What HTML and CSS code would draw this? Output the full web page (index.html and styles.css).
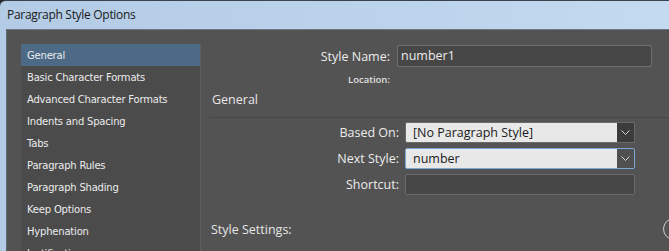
FILE: index.html
```html
<!DOCTYPE html>
<html>
<head>
<meta charset="utf-8">
<link rel="stylesheet" href="styles.css">
</head>
<body>
<div class="window">
  <div class="titlebar">Paragraph Style Options</div>
  <div class="frame">
    <div class="content">
      <ul class="nav">
        <li class="sel">General</li>
        <li>Basic Character Formats</li>
        <li>Advanced Character Formats</li>
        <li>Indents and Spacing</li>
        <li>Tabs</li>
        <li>Paragraph Rules</li>
        <li>Paragraph Shading</li>
        <li>Keep Options</li>
        <li>Hyphenation</li>
        <li>Justification</li>
      </ul>
      <div class="panel">
        <div class="name-row">
          <span class="label">Style Name:</span>
          <div class="input name-input">number1</div>
        </div>
        <div class="loc-row"><span class="label small">Location:</span></div>
        <div class="heading">General</div>
        <div class="section">
          <div class="row">
            <span class="label">Based On:</span>
            <div class="select">
              <span class="val">[No Paragraph Style]</span>
              <span class="arrow"><svg width="9" height="5" viewBox="0 0 9 5"><path d="M0.5 0.5 L4.5 4.5 L8.5 0.5" fill="none" stroke="#d8d8d8" stroke-width="1"/></svg></span>
            </div>
          </div>
          <div class="row">
            <span class="label">Next Style:</span>
            <div class="select focus">
              <span class="val">number</span>
              <span class="arrow"><svg width="9" height="5" viewBox="0 0 9 5"><path d="M0.5 0.5 L4.5 4.5 L8.5 0.5" fill="none" stroke="#d8d8d8" stroke-width="1"/></svg></span>
            </div>
          </div>
          <div class="row">
            <span class="label">Shortcut:</span>
            <div class="input shortcut"></div>
          </div>
          <div class="settings-row">
            <span class="settings">Style Settings:</span>
            <span class="circle"></span>
          </div>
        </div>
      </div>
    </div>
  </div>
</div>
</body>
</html>
```
FILE: styles.css
```css
html, body {
  margin: 0;
  padding: 0;
  width: 669px;
  height: 251px;
  overflow: hidden;
  background: #2a2a2a;
}
.window {
  width: 669px;
  height: 251px;
  display: flex;
  flex-direction: column;
  background: linear-gradient(90deg, #b3cbe5 0%, #bad2ea 50%, #c3daf0 100%);
  border-top: 1px solid #3a4450;
  border-top-left-radius: 6px;
  box-sizing: border-box;
  overflow: hidden;
}
.titlebar {
  height: 28px;
  box-sizing: border-box;
  padding: 5px 0 0 7px;
  font-family: "Open Sans", "Noto Sans", sans-serif;
  font-size: 12px;
  letter-spacing: -0.3px;
  color: #1a1a1a;
  flex: none;
}
.frame {
  flex: 1;
  padding-left: 6px;
  display: flex;
}
.content {
  flex: 1;
  background: #535353;
  border-left: 1px solid #5f6b78;
  border-top: 1px solid #6d7884;
  padding: 14px 0 0 14px;
  display: flex;
  align-items: flex-start;
  font-family: "Open Sans", "Noto Sans", sans-serif;
  color: #e6e6e6;
}
.nav {
  list-style: none;
  margin: 0;
  padding: 0;
  width: 179px;
  flex: none;
  background: #4b4b4b;
  border-right: 1px solid #5e5e5e;
  height: 230px;
  font-family: "DejaVu Sans", sans-serif;
  font-size: 10px;
  letter-spacing: -0.2px;
}
.nav li {
  height: 20px;
  padding-top: 2px;
  line-height: 20px;
  padding-left: 6px;
  color: #ececec;
}
.nav li.sel {
  background: #4c6a86;
}
.panel {
  flex: 1;
  display: flex;
  flex-direction: column;
}
.label {
  text-align: right;
  font-size: 12.5px;
  color: #ececec;
}
.name-row {
  display: flex;
  align-items: center;
  margin-top: 1px;
  height: 22px;
}
.name-row .label {
  width: 189px;
  margin-right: 7px;
}
.input {
  box-sizing: border-box;
  border: 1px solid #707070;
  border-radius: 2px;
  background: #474747;
  color: #ececec;
  font-size: 12.5px;
}
.name-input {
  width: 255px;
  height: 22px;
  line-height: 20px;
  padding-left: 3px;
}
.loc-row {
  display: flex;
  height: 22px;
  align-items: center;
  margin-top: 1px;
}
.loc-row .label {
  width: 189px;
}
.label.small {
  font-size: 9.5px;
  font-weight: 600;
  color: #e0e0e0;
}
.heading {
  font-size: 12.5px;
  padding-left: 11px;
  height: 20px;
  line-height: 20px;
  margin-top: 0;
}
.section {
  margin-left: 8px;
  border-top: 1px solid #474747;
  margin-top: 7px;
  padding-top: 4px;
  display: flex;
  flex-direction: column;
  gap: 5px;
}
.row {
  display: flex;
  align-items: center;
  height: 21px;
}
.row .label {
  width: 190px;
  margin-right: 6px;
}
.select {
  width: 230px;
  height: 21px;
  box-sizing: border-box;
  border: 1px solid #6a6a6a;
  border-radius: 2px;
  background: #e8e8e8;
  display: flex;
  color: #1b1b1b;
  font-size: 12.5px;
}
.select .val {
  flex: 1;
  padding-left: 7px;
  line-height: 19px;
}
.select .arrow {
  width: 17px;
  background: #3c3c3c;
  display: flex;
  align-items: center;
  justify-content: center;
}
.select.focus {
  border-color: #7ca6d4;
}
.select.focus .arrow {
  background: #505050;
}
.shortcut {
  width: 230px;
  height: 21px;
  border-color: #6a6a6a;
}
.settings-row {
  display: flex;
  align-items: center;
  justify-content: space-between;
  margin-top: 17px;
  height: 24px;
}
.settings {
  font-size: 12.5px;
  padding-left: 2px;
}
.circle {
  width: 22px;
  height: 22px;
  box-sizing: border-box;
  border: 1px solid #d0d0d0;
  border-radius: 50%;
  margin-right: -16px;
  flex: none;
}
```
